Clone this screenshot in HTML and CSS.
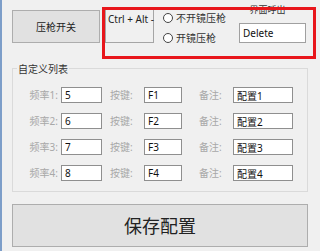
FILE: index.html
```html
<!DOCTYPE html>
<html lang="zh-CN">
<head>
    <meta charset="UTF-8">
    <title>压枪设置</title>
    <link rel="stylesheet" href="styles.css">
</head>
<body>
    <div class="window">
        <div class="top-row">
            <button class="btn toggle-btn">压枪开关</button>
            <div class="hotkey-panel">
                <div class="hotkey-box">Ctrl + Alt -</div>
                <div class="radio-col">
                    <label class="radio"><span class="dot"></span>不开镜压枪</label>
                    <label class="radio"><span class="dot"></span>开镜压枪</label>
                </div>
                <div class="call-col">
                    <div class="call-label">界面呼出</div>
                    <input class="field call-field" type="text" value="Delete">
                </div>
            </div>
        </div>

        <div class="group">
            <div class="group-title">自定义列表</div>
            <div class="grid">
                <span class="lbl lbl-freq">频率1:</span><input class="field w-freq" value="5">
                <span class="lbl lbl-key">按键:</span><input class="field w-key" value="F1">
                <span class="lbl lbl-note">备注:</span><input class="field w-note" value="配置1">

                <span class="lbl lbl-freq">频率2:</span><input class="field w-freq" value="6">
                <span class="lbl lbl-key">按键:</span><input class="field w-key" value="F2">
                <span class="lbl lbl-note">备注:</span><input class="field w-note" value="配置2">

                <span class="lbl lbl-freq">频率3:</span><input class="field w-freq" value="7">
                <span class="lbl lbl-key">按键:</span><input class="field w-key" value="F3">
                <span class="lbl lbl-note">备注:</span><input class="field w-note" value="配置3">

                <span class="lbl lbl-freq">频率4:</span><input class="field w-freq" value="8">
                <span class="lbl lbl-key">按键:</span><input class="field w-key" value="F4">
                <span class="lbl lbl-note">备注:</span><input class="field w-note" value="配置4">
            </div>
        </div>

        <button class="btn save-btn">保存配置</button>
    </div>
</body>
</html>
```

FILE: styles.css
```css
body {
    margin: 0;
    padding: 0;
    background-color: #f0f0f0;
    font-family: "Noto Sans", "Noto Sans CJK SC", sans-serif;
    font-size: 10px;
    color: #222;
}
.window {
    width: 320px;
    height: 251px;
    box-sizing: border-box;
    border-left: 2px solid #7d9ec9;
    padding-left: 10px;
    overflow: hidden;
}
.top-row {
    display: flex;
    align-items: flex-start;
    height: 52px;
    padding-top: 7px;
}
.btn {
    font-family: inherit;
    background-color: #e1e1e1;
    border: 1px solid #adadad;
    color: #222;
    padding: 0;
    box-sizing: border-box;
}
.toggle-btn {
    width: 88px;
    height: 33px;
    margin-top: 3px;
    font-size: 10px;
    line-height: 14px;
}
.hotkey-panel {
    position: relative;
    display: flex;
    align-items: flex-start;
    width: 214px;
    height: 52px;
    margin-left: 2px;
    padding: 3px;
    box-sizing: border-box;
}
.hotkey-panel::after {
    content: "";
    position: absolute;
    inset: 0;
    border: 3px solid #e8161b;
    pointer-events: none;
}
.hotkey-box {
    width: 49px;
    height: 34px;
    margin-top: -1px;
    box-sizing: border-box;
    border: 1px solid #a5a5a5;
    padding: 2px 0 0 2px;
    font-size: 10px;
    line-height: 14px;
    white-space: nowrap;
    color: #222;
}
.radio-col {
    display: flex;
    flex-direction: column;
    gap: 6px;
    width: 76px;
    margin-left: 9px;
    margin-top: 1px;
}
.radio {
    display: flex;
    align-items: center;
    gap: 3px;
    height: 14px;
    line-height: 14px;
    color: #333;
    white-space: nowrap;
}
.dot {
    width: 8px;
    height: 8px;
    border: 1px solid #444;
    border-radius: 50%;
    background: #fff;
}
.call-col {
    display: flex;
    flex-direction: column;
    width: 67px;
}
.call-label {
    margin-top: -6px;
    height: 12px;
    line-height: 12px;
    font-size: 9px;
    text-align: center;
    padding-right: 10px;
    color: #333;
}
.field {
    font-family: inherit;
    font-size: 10px;
    color: #111;
    background: #fff;
    border: 1px solid #8f8f8f;
    box-sizing: border-box;
    padding: 0 0 0 3px;
    margin: 0;
    height: 16px;
    line-height: 14px;
}
.call-field {
    height: 20px;
    margin-top: 7px;
    border-color: #a0a0a0;
}
.group {
    width: 296px;
    margin-top: 9px;
    border: 1px solid #dadada;
    box-sizing: border-box;
    padding-bottom: 10px;
}
.group-title {
    display: table;
    height: 14px;
    margin: -7px 0 0 4px;
    padding: 0 1px;
    line-height: 14px;
    background-color: #f0f0f0;
    color: #333;
}
.grid {
    display: grid;
    grid-template-columns: 48px 41px 42px 38px 51px 60px;
    grid-auto-rows: 16px;
    row-gap: 10px;
    align-items: center;
    margin-top: 11px;
}
.lbl {
    color: #a8a8a8;
    white-space: nowrap;
    line-height: 16px;
}
.lbl-freq {
    text-align: right;
    padding-right: 3px;
}
.lbl-key {
    padding-left: 8px;
}
.lbl-note {
    padding-left: 17px;
}
.w-freq { width: 41px; }
.w-key { width: 38px; }
.w-note { width: 60px; }
.save-btn {
    display: block;
    width: 296px;
    height: 43px;
    margin-top: 12px;
    font-size: 18px;
    line-height: 24px;
}
```
